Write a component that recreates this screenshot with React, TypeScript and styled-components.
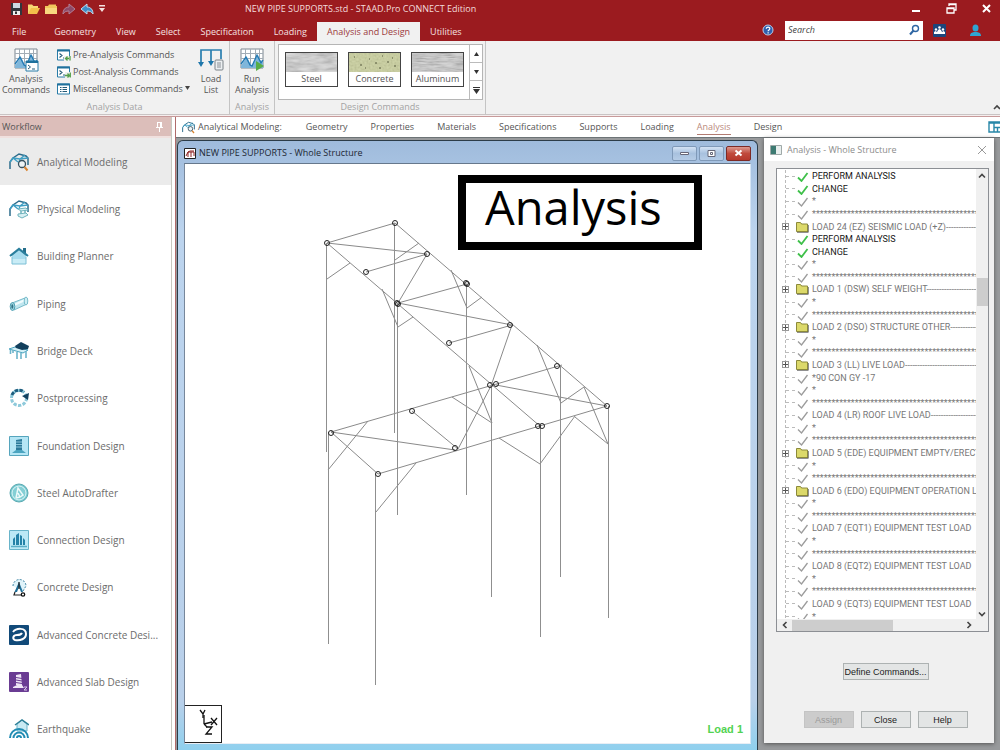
import React from "react";
import styled, { createGlobalStyle, css } from "styled-components";

const Global = createGlobalStyle`
  * { box-sizing: border-box; }
  body { margin: 0; font-family: "Open Sans", "Noto Sans", sans-serif; font-size: 9px; line-height: 12px; color: #555; }
  button, input { font: inherit; color: inherit; margin: 0; padding: 0; border: 0; background: none; }
  ul { list-style: none; margin: 0; padding: 0; }
  svg { display: block; flex: none; }
`;

const Page = styled.div`
  display: flex;
  flex-direction: column;
  height: 100vh;
  min-height: 750px;
  overflow: hidden;
  background: #fff;
`;

/* ---------- header ---------- */
const Header = styled.header`
  background: #9b1b1f;
  color: #f3dcdc;
`;
const TitleRow = styled.div`
  display: flex;
  align-items: center;
  height: 17px;
`;
const QuickAccess = styled.div`
  display: flex;
  align-items: center;
  gap: 4px;
  width: 245px;
  padding-left: 10px;
`;
const IconButton = styled.button`
  display: flex;
  align-items: center;
  justify-content: center;
`;
const AppTitle = styled.h1`
  flex: 1;
  margin: 0;
  font-size: 9px;
  font-weight: 400;
  white-space: nowrap;
`;
const WindowControls = styled.div`
  display: flex;
  gap: 24px;
  padding-right: 8px;
`;
const MenuRow = styled.div`
  display: flex;
  align-items: flex-end;
  height: 24px;
`;
const Menu = styled.nav`
  display: flex;
  flex: 1;
`;
const MenuTab = styled.button<{ $active?: boolean; $file?: boolean }>`
  height: 19px;
  padding: 0 10px;
  white-space: nowrap;
  color: ${(p) => (p.$active ? "#9b3a3c" : "#f5e0e0")};
  background: ${(p) => (p.$active ? "#f1f1f1" : "transparent")};
  ${(p) => p.$file && css`padding: 0 18px 0 12px;`}
`;
const HeaderTools = styled.div`
  display: flex;
  align-items: center;
  height: 22px;
  padding-right: 18px;
`;
const SearchBox = styled.label`
  display: flex;
  align-items: center;
  width: 138px;
  height: 19px;
  margin: 0 10px 0 11px;
  padding: 0 3px;
  background: #fff;
`;
const SearchInput = styled.input`
  flex: 1;
  min-width: 0;
  outline: 0;
  font-style: italic;
  &::placeholder { color: #444; opacity: 1; }
`;
const Gap = styled.span`
  width: 23px;
`;

/* ---------- ribbon ---------- */
const Ribbon = styled.section`
  display: flex;
  height: 74px;
  background: #f1f1f1;
  border-bottom: 1px solid #c9c4c4;
`;
const Group = styled.div`
  display: flex;
  flex-direction: column;
  justify-content: space-between;
  border-right: 1px solid #c4c4c4;
`;
const GroupBody = styled.div`
  display: flex;
  height: 60px;
`;
const GroupLabel = styled.div`
  height: 13px;
  text-align: center;
  color: #a3a3a3;
`;
const BigButton = styled.button<{ $w: number }>`
  display: flex;
  flex-direction: column;
  align-items: center;
  gap: 1px;
  width: ${(p) => p.$w}px;
  padding-top: 7px;
  line-height: 11px;
`;
const CommandList = styled.div`
  display: flex;
  flex-direction: column;
  width: 141px;
  padding: 5px 0 0 5px;
`;
const CommandButton = styled.button`
  display: flex;
  align-items: center;
  gap: 2px;
  height: 17px;
  white-space: nowrap;
`;
const Gallery = styled.div`
  display: flex;
  width: 205px;
  height: 56px;
  margin: 3px 2px 0 3px;
  background: #fff;
  border: 1px solid #b5b5b5;
`;
const Materials = styled.div`
  display: flex;
  flex: 1;
  gap: 10px;
  padding: 7px 0 0 6px;
`;
const MaterialButton = styled.button`
  display: flex;
  flex-direction: column;
  width: 53px;
  height: 35px;
  border: 1px solid #444;
  line-height: 14px;
`;
const MaterialName = styled.span`
  width: 100%;
  text-align: center;
`;
const Spinner = styled.div`
  display: grid;
  grid-template-rows: repeat(3, 1fr);
  width: 13px;
  border-left: 1px solid #bbb;
`;
const SpinButton = styled(IconButton)`
  border-bottom: 1px solid #bbb;
  &:last-child { border-bottom: 0; }
`;
const RibbonEnd = styled.div`
  display: flex;
  flex: 1;
  align-items: flex-end;
  justify-content: flex-end;
  padding-bottom: 3px;
  overflow: hidden;
`;
const Rule = styled.div`
  height: 2px;
  background: #f6eeee;
  border-bottom: 1px solid #c79a9a;
`;

/* ---------- body ---------- */
const Body = styled.div`
  display: flex;
  flex: 1;
  min-height: 0;
`;
const Sidebar = styled.aside`
  display: flex;
  flex-direction: column;
  width: 172px;
  overflow: hidden;
  border-right: 1px solid #c8c8c0;
`;
const SidebarHead = styled.div`
  display: flex;
  flex: none;
  align-items: center;
  justify-content: space-between;
  height: 21px;
  padding: 0 7px 0 2px;
  background: #dcbeba;
  border-bottom: 2px solid #f0e0de;
`;
const FlowList = styled.ul`
  display: flex;
  flex: none;
  flex-direction: column;
  height: 615px;
`;
const FlowItem = styled.li`
  display: flex;
  flex: 1;
`;
const FlowButton = styled.button<{ $active?: boolean }>`
  display: flex;
  align-items: center;
  gap: 8px;
  width: 100%;
  padding-left: 9px;
  font-size: 10px;
  color: #6c6c6c;
  white-space: nowrap;
  background: ${(p) => (p.$active ? "#ebebeb" : "transparent")};
`;
const Work = styled.main`
  display: flex;
  flex: 1;
  flex-direction: column;
  min-width: 0;
  margin-left: 3px;
  border-left: 1px solid #b06b6b;
`;
const Strip = styled.nav`
  display: flex;
  align-items: center;
  height: 20px;
  padding-left: 6px;
  background: #fff;
`;
const StripTitle = styled.span`
  display: flex;
  align-items: center;
  gap: 3px;
  margin-right: 12px;
  white-space: nowrap;
`;
const StripTab = styled.button<{ $active?: boolean }>`
  padding: 0 11px 0 12px;
  line-height: 14px;
  color: ${(p) => (p.$active ? "#b98a7c" : "#555")};
`;
const TabText = styled.span<{ $active?: boolean }>`
  display: block;
  border-bottom: 1px solid ${(p) => (p.$active ? "#b27c72" : "transparent")};
`;
const StripEnd = styled.span`
  display: flex;
  flex: 1;
  justify-content: flex-end;
`;
const Desk = styled.div`
  display: flex;
  flex: 1;
  gap: 6px;
  min-height: 0;
  padding: 2px 6px 0 1px;
  background: #989a9c;
  border-top: 1px solid #6d7477;
`;
const Frame = styled.section`
  display: flex;
  flex: 1;
  flex-direction: column;
  min-width: 0;
  padding: 0 6px;
  background: linear-gradient(#9fbbdc, #bcd4ee 90px, #b9d0ea 560px, #8fd0ee);
  border: 1px solid #2c3c48;
  border-bottom: 0;
  border-radius: 6px 6px 0 0;
`;
const FrameHead = styled.div`
  display: flex;
  align-items: center;
  height: 22px;
  padding-top: 2px;
  gap: 3px;
  color: #1d2733;
`;
const FrameTitle = styled.h2`
  flex: 1;
  margin: 0;
  font-size: 9px;
  font-weight: 400;
`;
const FrameButton = styled(IconButton)<{ $close?: boolean }>`
  width: 25px;
  height: 15px;
  margin-left: -1px;
  border: 1px solid ${(p) => (p.$close ? "#7d2a25" : "#7f99b8")};
  border-radius: 2px;
  background: ${(p) =>
    p.$close
      ? "linear-gradient(#dc9a90, #c04a3c 50%, #b5382c)"
      : "linear-gradient(#d3e2f4, #a8c1de 50%, #b6cce6)"};
`;
const Canvas = styled.div`
  position: relative;
  flex: 1;
  min-height: 0;
  overflow: hidden;
  margin-bottom: 6px;
  background: #fff;
  border: 1px solid #77879b;
  border-color: #66788c #d5e4f4 #e8eef5 #77879b;
`;
const Caption = styled.div`
  position: absolute;
  left: 273px;
  top: 11px;
  width: 244px;
  height: 75px;
  padding-left: 19px;
  border: 8px solid #000;
  background: #fff;
  color: #000;
  font-size: 47px;
  line-height: 48px;
`;
const AxisBox = styled.div`
  position: absolute;
  left: -1px;
  bottom: 0;
  width: 38px;
  height: 38px;
  border: 1px solid #222;
`;
const LoadLabel = styled.div`
  position: absolute;
  right: 7px;
  bottom: 8px;
  font: bold 11px/12px "Liberation Sans", sans-serif;
  color: #52d352;
`;

/* ---------- analysis dialog ---------- */
const Dialog = styled.section`
  display: flex;
  flex: none;
  flex-direction: column;
  width: 230px;
  margin: -2px 0 7px;
  background: #f0f0f0;
  box-shadow: 0 1px 4px #555;
`;
const DialogHead = styled.div`
  display: flex;
  align-items: center;
  gap: 5px;
  height: 23px;
  padding: 0 7px 0 6px;
  background: #fff;
  color: #8c8c8c;
`;
const DialogTitle = styled.h2`
  flex: 1;
  margin: 0;
  font-size: 9px;
  font-weight: 400;
`;
const TreeBox = styled.div`
  display: grid;
  grid-template-columns: 1fr 12px;
  grid-template-rows: 1fr 12px;
  height: 464px;
  margin: 7px 5px 0 12px;
  border: 1px solid #8c8f94;
  background: #fff;
`;
const TreeView = styled.div`
  min-width: 0;
  overflow: hidden;
  padding-top: 1px;
`;
const Tree = styled.ul`
  display: flex;
  flex-direction: column;
  height: 453px;
  margin-left: 8px;
  border-left: 1px dashed #bbb;
  font-family: Roboto, "Liberation Sans", sans-serif;
`;
const TreeRow = styled.li<{ $strong?: boolean }>`
  display: flex;
  flex: 1;
  align-items: center;
  min-height: 0;
  color: ${(p) => (p.$strong ? "#161616" : "#777")};
  white-space: nowrap;
`;
const Branch = styled.span`
  flex: none;
  width: 9px;
  margin-right: 1px;
  border-top: 1px dashed #bbb;
`;
const Expander = styled.button`
  flex: none;
  display: flex;
  width: 7px;
  height: 7px;
  margin: 0 7px 0 -4px;
  border: 1px solid #999;
  background: #fff;
`;
const RowText = styled.span`
  margin-left: 3px;
`;
const VBar = styled.div`
  display: flex;
  flex-direction: column;
  justify-content: space-between;
  align-items: center;
  padding: 3px 0 1px;
  background: #f0f0f0;
`;
const VThumb = styled.div`
  width: 11px;
  height: 28px;
  margin: 94px 0 300px;
  background: #cdcdcd;
`;
const HBar = styled.div`
  display: flex;
  align-items: center;
  grid-column: 1 / 3;
  padding: 0 15px 0 4px;
  background: #f0f0f0;
`;
const HThumb = styled.div`
  width: 101px;
  height: 11px;
  margin: 0 auto 0 3px;
  background: #cdcdcd;
`;
const Actions = styled.div`
  display: flex;
  justify-content: center;
  gap: 7px;
  padding: 31px 0 0 13px;
`;
const PushButton = styled.button<{ $w?: number }>`
  width: ${(p) => p.$w ?? 50}px;
  height: 17px;
  color: #1c1c1c;
  font-family: "Liberation Sans", sans-serif;
  background: #e3e5e5;
  border: 1px solid #adb2b2;
  &:disabled { color: #9a9a9a; background: #cccccc; border-color: #c4c4c4; }
`;

/* ---------- icons ---------- */
const Chevron = ({ d }: { d: string }) => (
  <svg width="8" height="8" viewBox="0 0 8 8" fill="none" stroke="#444" strokeWidth="1.6">
    <path d={d} />
  </svg>
);

const Arrow = ({ flip, color, line }: { flip?: boolean; color: string; line: string }) => (
  <svg width="14" height="12" viewBox="0 0 14 12">
    <path
      d="M1 6l6-5v3c4 0 6 3 6 7-1-2-3-3-6-3v3z"
      fill={color}
      stroke={line}
      transform={flip ? "matrix(-1 0 0 1 14 0)" : undefined}
    />
  </svg>
);

const GridChart = ({ children }: { children?: React.ReactNode }) => (
  <svg width="25" height="24" viewBox="0 0 25 24">
    <path d="M1 1h22v19H1z" fill="#fff" stroke="#7c8791" />
    <path d="M1 5.500h22M1 10.500h22M5.500 1v19M10.500 1v19M15.500 1v19M19.500 1v19" stroke="#a3adb6" />
    <path d="M1 18l3-5 3-4 3 6 2 3 3-7 3-4 2 5 3 1v7H1z" fill="#7fb6da" />
    <path d="M1 16l5-7 4 8 2 1 5-11 4 8 2-3" fill="none" stroke="#2279b3" strokeWidth="1.300" />
    {children}
  </svg>
);

const Prompt = () => (
  <>
    <path d="M.5 1h12v10H.5z" fill="#fff" stroke="#287ca8" />
    <path d="M0 1.500h13" stroke="#1f719c" strokeWidth="2" />
    <path d="M2.500 4.500l2.500 2-2.500 2M6 9h3" fill="none" stroke="#235a78" strokeWidth="1.100" />
  </>
);

const CommandIcon = ({ kind }: { kind: "pre" | "post" | "misc" }) => (
  <svg width="14" height="12" viewBox="0 0 14 12">
    {kind === "misc" ? (
      <>
        <path d="M.5 1h12v10H.5z" fill="#fff" stroke="#287ca8" />
        <path d="M0 1.500h13" stroke="#1f719c" strokeWidth="2" />
        <path d="M3 4.500h1.500M3 6.500h1.500M3 8.500h1.500M5.500 4.500h4.500M5.500 6.500h4.500M5.500 8.500h4.500" stroke="#235a78" />
      </>
    ) : (
      <>
        <Prompt />
        <path d={kind === "pre" ? "M7 7h7v5H7z" : "M8 6h6v6H8z"} fill="#f1f1f1" />
        <path
          d={kind === "pre" ? "M13 7v4.500M12 9.500H8.500M10.500 7.500l-2 2 2 2" : "M8 9.500h4M10.500 7.500l2 2-2 2M13.300 6.500v5"}
          fill="none"
          stroke="#54a04a"
          strokeWidth="1.300"
        />
      </>
    )}
  </svg>
);

const LoadIcon = () => (
  <svg width="26" height="24" viewBox="0 0 26 24">
    <path d="M3 16V2h20v9M13 2v13" fill="none" stroke="#2a7fb0" strokeWidth="1.700" />
    <path d="M0 14h6l-3 5zM10 13h6l-3 5z" fill="#1f77ab" />
    <rect x="17" y="12" width="8" height="10" rx="1" fill="#eceff1" stroke="#7b8288" />
    <path d="M19 15h4M19 17h4M19 19h4" stroke="#8a9096" />
  </svg>
);

const Swatch = ({ kind }: { kind: "steel" | "concrete" | "aluminum" }) => {
  const base = { steel: "#c9c9c9", concrete: "#c5cb98", aluminum: "#bdbdbd" }[kind];
  const freq = { steel: "0.06 0.22", concrete: "0.5", aluminum: "0.07 0.7" }[kind];
  return (
    <svg width="51" height="19">
      <filter id={kind} x="0" y="0" width="1" height="1">
        <feTurbulence type="fractalNoise" baseFrequency={freq} numOctaves="3" seed="4" />
        <feColorMatrix values="1 0 0 0 0 1 0 0 0 0 1 0 0 0 0 0 0 0 0 1" />
        <feComponentTransfer>
          <feFuncR type="linear" slope="1.300" intercept="0" />
          <feFuncG type="linear" slope="1.300" intercept="0" />
          <feFuncB type="linear" slope="1.300" intercept="0" />
        </feComponentTransfer>
      </filter>
      <rect width="51" height="19" fill={base} />
      <rect width="51" height="19" filter={`url(#${kind})`} opacity={kind === "concrete" ? 0.15 : 0.35} />
      {kind === "concrete" && (
        <path d="M5 4h1M11 12h2M20 6h1M26 10h2M33 3h1M38 9h2M45 13h2M16 15h1M30 15h2M43 5h1" stroke="#55583c" />
      )}
    </svg>
  );
};

const StructureShape = () => (
  <>
    <path d="M1 17V10l3-4 6-4 7 2 2 2v7" fill="none" stroke="#2c6c8c" strokeWidth="1.500" />
    <path d="M4 6l7 1 8-1M11 7l-1 3M1 10l3-4 5 4M11 7l5-4" fill="none" stroke="#3f9fc4" strokeWidth="1.300" />
  </>
);

const AnalyticalIcon = ({ size = 20 }: { size?: number }) => (
  <svg width={size} height={size} viewBox="0 0 20 20">
    <StructureShape />
    <circle cx="13" cy="12" r="3.500" fill="#eef3f5" stroke="#35505e" strokeWidth="1.300" />
    <path d="M15.500 15l3 3.500" stroke="#d9832f" strokeWidth="2" />
  </svg>
);

const FlowIcon = ({ name }: { name: string }) => {
  if (name === "analytical") return <AnalyticalIcon />;
  const art: Record<string, React.ReactNode> = {
    physical: (
      <>
        <StructureShape />
        <path d="M9 10l8-1 2 2-7 1zM9 15l8-1 2 2-6 3-4-2z" fill="#d8f0f4" stroke="#6fb3bd" />
        <path d="M12 12v3M16 11v3" stroke="#6fb3bd" strokeWidth="1.500" />
      </>
    ),
    building: (
      <>
        <path d="M3 9l7-6 7 6v9H3z" fill="#a9dcee" />
        <path d="M3 13h14v5H3z" fill="#c9ecf6" />
        <path d="M14 2h3v5h-3z" fill="#246d8a" />
        <path d="M1 10l9-7 9 7" fill="none" stroke="#2b7f9d" strokeWidth="2.200" />
        <path d="M3 11v7h14v-7" fill="none" stroke="#7cc0d6" />
      </>
    ),
    piping: (
      <>
        <path d="M3 9l13-5 2 6-13 6z" fill="#bfe6ef" stroke="#79bccb" />
        <path d="M5 11l11-5" stroke="#f0fbfd" strokeWidth="2" />
        <ellipse cx="3.500" cy="12.500" rx="2.300" ry="4" fill="#9ed6e2" stroke="#4f9fb2" />
        <ellipse cx="3.300" cy="12.500" rx="1" ry="2.200" fill="#2f7285" />
        <ellipse cx="17" cy="7" rx="1.800" ry="4" fill="#cdeef4" stroke="#79bccb" />
      </>
    ),
    bridge: (
      <>
        <path d="M0 8l6-2 13 3-5 3z" fill="#d3eff6" stroke="#4aa3bf" />
        <path d="M6 5l6-4 8 4-1 3-6 1-6-2z" fill="#123f5c" />
        <path d="M1.500 9v4M8 11v7M12 12v6M17 10v7M4 9v3" fill="none" stroke="#6db4cb" strokeWidth="1.600" />
      </>
    ),
    post: (
      <>
        <circle cx="10" cy="10" r="7.500" fill="none" stroke="#8fcadb" strokeWidth="3" strokeDasharray="3.300 1.400" />
        <path d="M3 7a7.500 7.500 0 0 1 12-3" fill="none" stroke="#1d5d7e" strokeWidth="3" strokeDasharray="3.300 1.400" />
        <path d="M13 8l7-3-1 7z" fill="#12415f" />
      </>
    ),
    foundation: (
      <>
        <path d="M.5.5h19v19H.5z" fill="#b5e6f5" stroke="#56a5bd" />
        <path d="M7 4l6-1v11H7z" fill="#2b7999" />
        <path d="M7 6h6M7 8.500h6M7 11h6" stroke="#8cc6da" />
        <path d="M3 17l4-3h6l4 3z" fill="#4ba4c0" />
      </>
    ),
    steel: (
      <>
        <circle cx="10" cy="10" r="9" fill="#74c8cf" stroke="#5ba9b1" />
        <circle cx="10" cy="10" r="7" fill="#84cfd5" stroke="#e2f6f7" />
        <path d="M7 15l2-10 5 7-3 2-2-4M7 15l4-1" fill="none" stroke="#eefafa" strokeWidth="1.500" />
      </>
    ),
    connection: (
      <>
        <path d="M.5.5h19v19H.5z" fill="#bce9f6" stroke="#69b4ca" />
        <path d="M4 15V9l2-2v8zM7 15V5l3-2v12zM11 15V5l2 1v9zM14 15V8l2 2v5z" fill="#2482a8" />
        <path d="M2 16.500h16" stroke="#59acc6" strokeWidth="1.500" />
      </>
    ),
    concrete: (
      <>
        <path d="M4 9a6.500 6.500 0 0 1 13 0l-3 5" fill="#dff3fa" stroke="#3c83a3" strokeDasharray="2 1.400" />
        <path d="M10 5l4 10h-2l-2-5-2 5H5.500z" fill="#1d6d97" />
        <path d="M6 15l-1 3h9M10 5v7" fill="none" stroke="#222" strokeWidth="1.200" />
        <circle cx="14" cy="17.500" r="1.700" fill="#fff" stroke="#111" strokeWidth="1.300" />
      </>
    ),
    advConcrete: (
      <>
        <rect width="20" height="20" rx="1" fill="#114a79" />
        <path d="M4 7c3-4 13-5 13 2 0 5-6 7-11 6-3-1-2-5 2-5 2 0 4 0 5-2" fill="none" stroke="#fff" strokeWidth="2" />
      </>
    ),
    advSlab: (
      <>
        <rect width="20" height="20" rx="1" fill="#6a3c93" />
        <path d="M7 3l5-1 1 11H7zM4 15l4-2h5l2 3H4z" fill="#efe6f6" />
        <path d="M7 5.500l6 1M7 8l6 1M7 10.500l6 1" stroke="#6a3c93" />
        <path d="M15 15h3l-3 3h3" fill="none" stroke="#d8c3e8" />
      </>
    ),
    earthquake: (
      <>
        <path d="M8 5l5-4 5 4v7H8z" fill="#c9eaf3" stroke="#6ab2c8" />
        <path d="M6 6l7-5 7 5" fill="none" stroke="#2e8098" strokeWidth="1.500" />
        <path d="M1 19a9 9 0 0 1 18 0M4.500 19a5.500 5.500 0 0 1 11 0M8 19a2 2 0 0 1 4 0" fill="none" stroke="#218cb3" strokeWidth="2" />
      </>
    ),
  };
  return (
    <svg width="20" height="20" viewBox="0 0 20 20">
      {art[name]}
    </svg>
  );
};

const Check = ({ on }: { on?: boolean }) => (
  <svg width="13" height="12" viewBox="0 0 13 12">
    <path d="M2 7.500l3.500 3.500L11.500 3" fill="none" stroke={on ? "#3fc04a" : "#9c9c9c"} strokeWidth={on ? 1.8 : 1.3} />
  </svg>
);

const Folder = () => (
  <svg width="13" height="12" viewBox="0 0 13 12">
    <path d="M1 2.500h4.500l1 1.500H12.500v7.500H1z" fill="#222" />
    <path d="M.5 1.500h4l1 1.500h6v7.500H.5z" fill="#dcd96a" stroke="#8c8a3a" />
  </svg>
);

/* ---------- structural model ---------- */
const members = [
  "M327 243L395 223L607 406L378 474L331 432L562 365",
  "M327 243L427 254L366 272M427 254L398 303M327 243L541 427",
  "M398 303L467 284M398 303L512 325L449 343M512 325L492 383",
  "M496 385L607 406M331 432L455 450M412 411L458 449L492 384",
  "M327 279L350 263M395 260L419 243M451 270L467 308L482 297",
  "M382 289L398 327L413 317M537 345L561 403L584 387L608 444L575 417",
  "M469 366L492 423L452 397M575 416L540 464L499 438",
  "M368 421L328 470M416 463L376 512",
];
const columns = [
  [326.5, 243, 452], [394.5, 223, 433], [397.5, 303, 515], [466.5, 284, 495], [491.5, 385, 597],
  [328.5, 432, 644], [375.5, 474, 685], [540.5, 426, 637], [560.5, 366, 577], [608.5, 406, 618],
];
const joints = [
  [327, 243], [395, 223], [427, 254], [366, 272], [397, 303], [398, 304], [466, 283], [467, 284],
  [510, 325], [449, 343], [557, 366], [490, 385], [496, 384], [607, 406], [412, 411], [331, 433],
  [455, 448], [378, 474], [538, 426], [542, 426],
];

const StructureModel = () => (
  <svg width="565" height="578" viewBox="185 164 565 578" fill="none" role="img" aria-label="Whole structure">
    {members.map((d) => (
      <path key={d} d={d} stroke="#8a8a8a" />
    ))}
    {columns.map(([x, a, b]) => (
      <path key={x} d={`M${x} ${a}V${b}`} stroke="#8f8f8f" />
    ))}
    {joints.map(([x, y]) => (
      <circle key={`${x}-${y}`} cx={x} cy={y} r="2.500" stroke="#222" />
    ))}
  </svg>
);

/* ---------- data ---------- */
const menuTabs = ["File", "Geometry", "View", "Select", "Specification", "Loading", "Analysis and Design", "Utilities"];
const stripTabs = ["Geometry", "Properties", "Materials", "Specifications", "Supports", "Loading", "Analysis", "Design"];
const flows = [
  ["analytical", "Analytical Modeling"],
  ["physical", "Physical Modeling"],
  ["building", "Building Planner"],
  ["piping", "Piping"],
  ["bridge", "Bridge Deck"],
  ["post", "Postprocessing"],
  ["foundation", "Foundation Design"],
  ["steel", "Steel AutoDrafter"],
  ["connection", "Connection Design"],
  ["concrete", "Concrete Design"],
  ["advConcrete", "Advanced Concrete Desi..."],
  ["advSlab", "Advanced Slab Design"],
  ["earthquake", "Earthquake"],
];
const STARS = "*".repeat(60);
const DASHES = "-".repeat(50);
type Row = { kind: "run" | "note" | "folder"; text: string };
const run = (text: string): Row => ({ kind: "run", text });
const note = (text: string): Row => ({ kind: "note", text });
const folder = (text: string): Row => ({ kind: "folder", text });
const gap = [note("*"), note(STARS)];
const rows: Row[] = [
  run("PERFORM ANALYSIS"), run("CHANGE"), ...gap,
  folder("LOAD 24 (EZ) SEISMIC LOAD (+Z)" + DASHES),
  run("PERFORM ANALYSIS"), run("CHANGE"), ...gap,
  folder("LOAD 1 (DSW) SELF WEIGHT" + DASHES), ...gap,
  folder("LOAD 2 (DSO) STRUCTURE OTHER" + DASHES), ...gap,
  folder("LOAD 3 (LL) LIVE LOAD" + DASHES),
  note("*90 CON GY -17"), ...gap,
  note("LOAD 4 (LR) ROOF LIVE LOAD" + DASHES), ...gap,
  folder("LOAD 5 (EDE) EQUIPMENT EMPTY/ERECTION"), ...gap,
  folder("LOAD 6 (EDO) EQUIPMENT OPERATION LOAD"), ...gap,
  note("LOAD 7 (EQT1) EQUIPMENT TEST LOAD"), ...gap,
  note("LOAD 8 (EQT2) EQUIPMENT TEST LOAD"), ...gap,
  note("LOAD 9 (EQT3) EQUIPMENT TEST LOAD"), note("*"),
];

export default function App() {
  return (
    <Page>
      <Global />
      <Header>
        <TitleRow>
          <QuickAccess>
            <IconButton aria-label="Save">
              <svg width="13" height="12" viewBox="0 0 13 12">
                <path d="M1 0h11v12H1z" fill="#33353c" />
                <path d="M3 0h7v5H3z" fill="#cfd8e2" />
                <path d="M3 8h7v4H3z" fill="#eee" />
                <path d="M5 8.500h2V11H5z" fill="#333" />
              </svg>
            </IconButton>
            <IconButton aria-label="Open">
              <svg width="13" height="12" viewBox="0 0 13 12">
                <path d="M1 11V1.500h4L6.500 3H11v3" fill="#f7d774" />
                <path d="M1 11l3-6h9l-3 6z" fill="#f3bf4b" />
              </svg>
            </IconButton>
            <IconButton aria-label="Recent">
              <svg width="14" height="12" viewBox="0 0 14 12">
                <path d="M1 11V3h3l1-1.500h7V3h1v8z" fill="#f0c65c" />
                <path d="M1 5h12v6H1z" fill="#f8d87f" />
              </svg>
            </IconButton>
            <IconButton aria-label="Redo"><Arrow flip color="#8e4a68" line="#b28298" /></IconButton>
            <IconButton aria-label="Undo"><Arrow color="#3f8dc7" line="#c2dbef" /></IconButton>
            <IconButton aria-label="Customize">
              <svg width="8" height="8" viewBox="0 0 8 8"><path d="M1 0h6v1.500H1zM1 3h6L4 7z" fill="#f5e0e0" /></svg>
            </IconButton>
          </QuickAccess>
          <AppTitle>NEW PIPE SUPPORTS.std - STAAD.Pro CONNECT Edition</AppTitle>
          <WindowControls>
            <IconButton aria-label="Minimize">
              <svg width="11" height="11" viewBox="0 0 11 11"><path d="M1 8h8" stroke="#fff" strokeWidth="2" /></svg>
            </IconButton>
            <IconButton aria-label="Restore">
              <svg width="11" height="11" viewBox="0 0 11 11" fill="none" stroke="#fff">
                <path d="M1 5h7v5H1zM1 5.500h7M3 3V1h7v6H8M3 1.500h7" strokeWidth="1.300" />
              </svg>
            </IconButton>
            <IconButton aria-label="Close">
              <svg width="11" height="11" viewBox="0 0 11 11"><path d="M2 2l7 7M9 2L2 9" stroke="#fff" strokeWidth="2" /></svg>
            </IconButton>
          </WindowControls>
        </TitleRow>
        <MenuRow>
          <Menu>
            {menuTabs.map((t) => (
              <MenuTab key={t} $file={t === "File"} $active={t === "Analysis and Design"}>{t}</MenuTab>
            ))}
          </Menu>
          <HeaderTools>
            <IconButton aria-label="Help">
              <svg width="12" height="12" viewBox="0 0 12 12">
                <circle cx="6" cy="6" r="5" fill="#2f5fae" stroke="#b9cbe8" />
                <path d="M4.300 4.800c0-2.300 3.600-2.200 3.500 0 0 1.200-1.700 1.200-1.700 2.500M6.100 8.300v1.200" fill="none" stroke="#fff" strokeWidth="1.200" />
              </svg>
            </IconButton>
            <SearchBox>
              <SearchInput placeholder="Search" aria-label="Search" />
              <svg width="11" height="12" viewBox="0 0 11 12" fill="none" stroke="#2e66a3">
                <circle cx="6.500" cy="4.500" r="3" strokeWidth="1.400" />
                <path d="M4.500 6.500L1 10.500" strokeWidth="2" />
              </svg>
            </SearchBox>
            <IconButton aria-label="Community">
              <svg width="13" height="13" viewBox="0 0 13 13">
                <rect width="13" height="13" rx="1" fill="#1d467c" />
                <path d="M1 10V8l1.500-1L4 8l1-2 1.500-1L8 6l1 2 1.500-1L12 8v2z" fill="#fff" />
                <circle cx="3" cy="5.500" r="1.200" fill="#fff" /><circle cx="6.500" cy="3.500" r="1.300" fill="#fff" /><circle cx="10" cy="5.500" r="1.200" fill="#fff" />
              </svg>
            </IconButton>
            <Gap />
            <IconButton aria-label="Account">
              <svg width="13" height="13" viewBox="0 0 13 13" fill="#2fa5d2">
                <ellipse cx="6.500" cy="4" rx="3" ry="3.500" />
                <path d="M1 12c0-3 2-3.500 4-4h3c2 .5 4 1 4 4z" />
              </svg>
            </IconButton>
          </HeaderTools>
        </MenuRow>
      </Header>

      <Ribbon>
        <Group>
          <GroupBody>
            <BigButton $w={52}>
              <GridChart>
                <path d="M12 13h12v10H12z" fill="#fff" stroke="#287ca8" />
                <path d="M12 14h12" stroke="#1f719c" strokeWidth="2" />
                <path d="M14 17l2.500 2-2.500 2M18 21h3" fill="none" stroke="#235a78" />
              </GridChart>
              <span>Analysis<br />Commands</span>
            </BigButton>
            <CommandList>
              <CommandButton><CommandIcon kind="pre" />Pre-Analysis Commands</CommandButton>
              <CommandButton><CommandIcon kind="post" />Post-Analysis Commands</CommandButton>
              <CommandButton>
                <CommandIcon kind="misc" />Miscellaneous Commands
                <svg width="5" height="6" viewBox="0 0 5 6"><path d="M0 0h5L2.500 4z" fill="#444" /></svg>
              </CommandButton>
            </CommandList>
            <BigButton $w={36}>
              <LoadIcon />
              <span>Load<br />List</span>
            </BigButton>
          </GroupBody>
          <GroupLabel>Analysis Data</GroupLabel>
        </Group>
        <Group>
          <GroupBody>
            <BigButton $w={44}>
              <GridChart><path d="M16 13l8 5-8 5z" fill="#58ad47" /></GridChart>
              <span>Run<br />Analysis</span>
            </BigButton>
          </GroupBody>
          <GroupLabel>Analysis</GroupLabel>
        </Group>
        <Group>
          <GroupBody>
            <Gallery>
              <Materials>
                <MaterialButton><Swatch kind="steel" /><MaterialName>Steel</MaterialName></MaterialButton>
                <MaterialButton><Swatch kind="concrete" /><MaterialName>Concrete</MaterialName></MaterialButton>
                <MaterialButton><Swatch kind="aluminum" /><MaterialName>Aluminum</MaterialName></MaterialButton>
              </Materials>
              <Spinner>
                <SpinButton aria-label="Scroll up"><svg width="5" height="4"><path d="M0 4h5L2.500 0z" fill="#333" /></svg></SpinButton>
                <SpinButton aria-label="Scroll down"><svg width="5" height="4"><path d="M0 0h5L2.500 4z" fill="#333" /></svg></SpinButton>
                <SpinButton aria-label="More"><svg width="7" height="7"><path d="M0 0h7v1H0zM0 2h7L3.500 7z" fill="#333" /></svg></SpinButton>
              </Spinner>
            </Gallery>
          </GroupBody>
          <GroupLabel>Design Commands</GroupLabel>
        </Group>
        <RibbonEnd>
          <IconButton aria-label="Collapse ribbon"><Chevron d="M2 6l3-3 3 3" /></IconButton>
        </RibbonEnd>
      </Ribbon>
      <Rule />

      <Body>
        <Sidebar>
          <SidebarHead>
            Workflow
            <svg width="9" height="10" viewBox="0 0 9 10" fill="none" stroke="#fff">
              <path d="M2.500 0v5M5.500 0v5M2 .5h5M1 5.500h7M4.500 6v4M6.500 0v5" />
            </svg>
          </SidebarHead>
          <FlowList>
            {flows.map(([icon, label]) => (
              <FlowItem key={icon}>
                <FlowButton $active={icon === "analytical"}><FlowIcon name={icon} />{label}</FlowButton>
              </FlowItem>
            ))}
          </FlowList>
        </Sidebar>

        <Work>
          <Strip>
            <StripTitle><AnalyticalIcon size={13} />Analytical Modeling:</StripTitle>
            {stripTabs.map((t) => (
              <StripTab key={t} $active={t === "Analysis"}><TabText $active={t === "Analysis"}>{t}</TabText></StripTab>
            ))}
            <StripEnd>
              <IconButton aria-label="Layout">
                <svg width="12" height="12" viewBox="0 0 12 12" fill="#fff" stroke="#2787a8" strokeWidth="1.400">
                  <path d="M1 1h12v10H1zM1 2h12M6 2v9M6 6.500h6M9.500 6.500v5" />
                </svg>
              </IconButton>
            </StripEnd>
          </Strip>
          <Desk>
            <Frame>
              <FrameHead>
                <svg width="12" height="11" viewBox="0 0 12 11">
                  <path d="M.5.5h11v10H.5z" fill="#fff" stroke="#222" />
                  <path d="M2 8l2-4h6v4M4 4v5M7 4v5M4 4l2-1h4" fill="none" stroke="#8e2323" />
                </svg>
                <FrameTitle>NEW PIPE SUPPORTS - Whole Structure</FrameTitle>
                <FrameButton aria-label="Minimize window">
                  <svg width="9" height="5"><path d="M.5 1.500h8v2h-8z" fill="#fff" stroke="#667" /></svg>
                </FrameButton>
                <FrameButton aria-label="Maximize window">
                  <svg width="9" height="7"><path d="M1 .5h7v6H1zM3.500 2.500h2v2h-2z" fill="#fff" stroke="#667" /></svg>
                </FrameButton>
                <FrameButton $close aria-label="Close window">
                  <svg width="9" height="8"><path d="M1.500 1.500l6 5M7.500 1.500l-6 5" stroke="#fff" strokeWidth="2" /></svg>
                </FrameButton>
              </FrameHead>
              <Canvas>
                <StructureModel />
                <Caption>Analysis</Caption>
                <AxisBox>
                  <svg width="36" height="36" viewBox="0 0 36 36" fill="none" stroke="#111" strokeWidth="1.300">
                    <path d="M19 9v9M19 18l8-2M19 18l3 3" />
                    <path d="M15 4l3 4 2-4M18 8v4M26 12l6 7M32 12l-6 7M21 21h6l-6 7h6" />
                  </svg>
                </AxisBox>
                <LoadLabel>Load 1</LoadLabel>
              </Canvas>
            </Frame>

            <Dialog>
              <DialogHead>
                <svg width="12" height="10" viewBox="0 0 12 10">
                  <path d="M.5.5h11v9H.5z" fill="#e9efee" stroke="#9fa9a8" />
                  <path d="M1 1h5v8H1z" fill="#3d7a72" />
                </svg>
                <DialogTitle>Analysis - Whole Structure</DialogTitle>
                <IconButton aria-label="Close dialog">
                  <svg width="10" height="10"><path d="M1 1l8 8M9 1L1 9" stroke="#999" /></svg>
                </IconButton>
              </DialogHead>
              <TreeBox>
                <TreeView>
                  <Tree>
                    {rows.map((r, i) => (
                      <TreeRow key={i} $strong={r.kind === "run"}>
                        {r.kind === "folder" ? (
                          <Expander aria-label="Expand">
                            <svg width="5" height="5"><path d="M0 2.500h5M2.500 0v5" stroke="#555" /></svg>
                          </Expander>
                        ) : (
                          <Branch />
                        )}
                        {r.kind === "folder" ? <Folder /> : <Check on={r.kind === "run"} />}
                        <RowText>{r.text}</RowText>
                      </TreeRow>
                    ))}
                  </Tree>
                </TreeView>
                <VBar>
                  <Chevron d="M1 5.500l3-3 3 3" />
                  <VThumb />
                  <Chevron d="M1 2.500l3 3 3-3" />
                </VBar>
                <HBar>
                  <Chevron d="M5.500 1l-3 3 3 3" />
                  <HThumb />
                  <Chevron d="M2.500 1l3 3-3 3" />
                </HBar>
              </TreeBox>
              <Actions>
                <PushButton $w={86}>Define Commands...</PushButton>
              </Actions>
              <Actions>
                <PushButton disabled>Assign</PushButton>
                <PushButton>Close</PushButton>
                <PushButton>Help</PushButton>
              </Actions>
            </Dialog>
          </Desk>
        </Work>
      </Body>
    </Page>
  );
}
